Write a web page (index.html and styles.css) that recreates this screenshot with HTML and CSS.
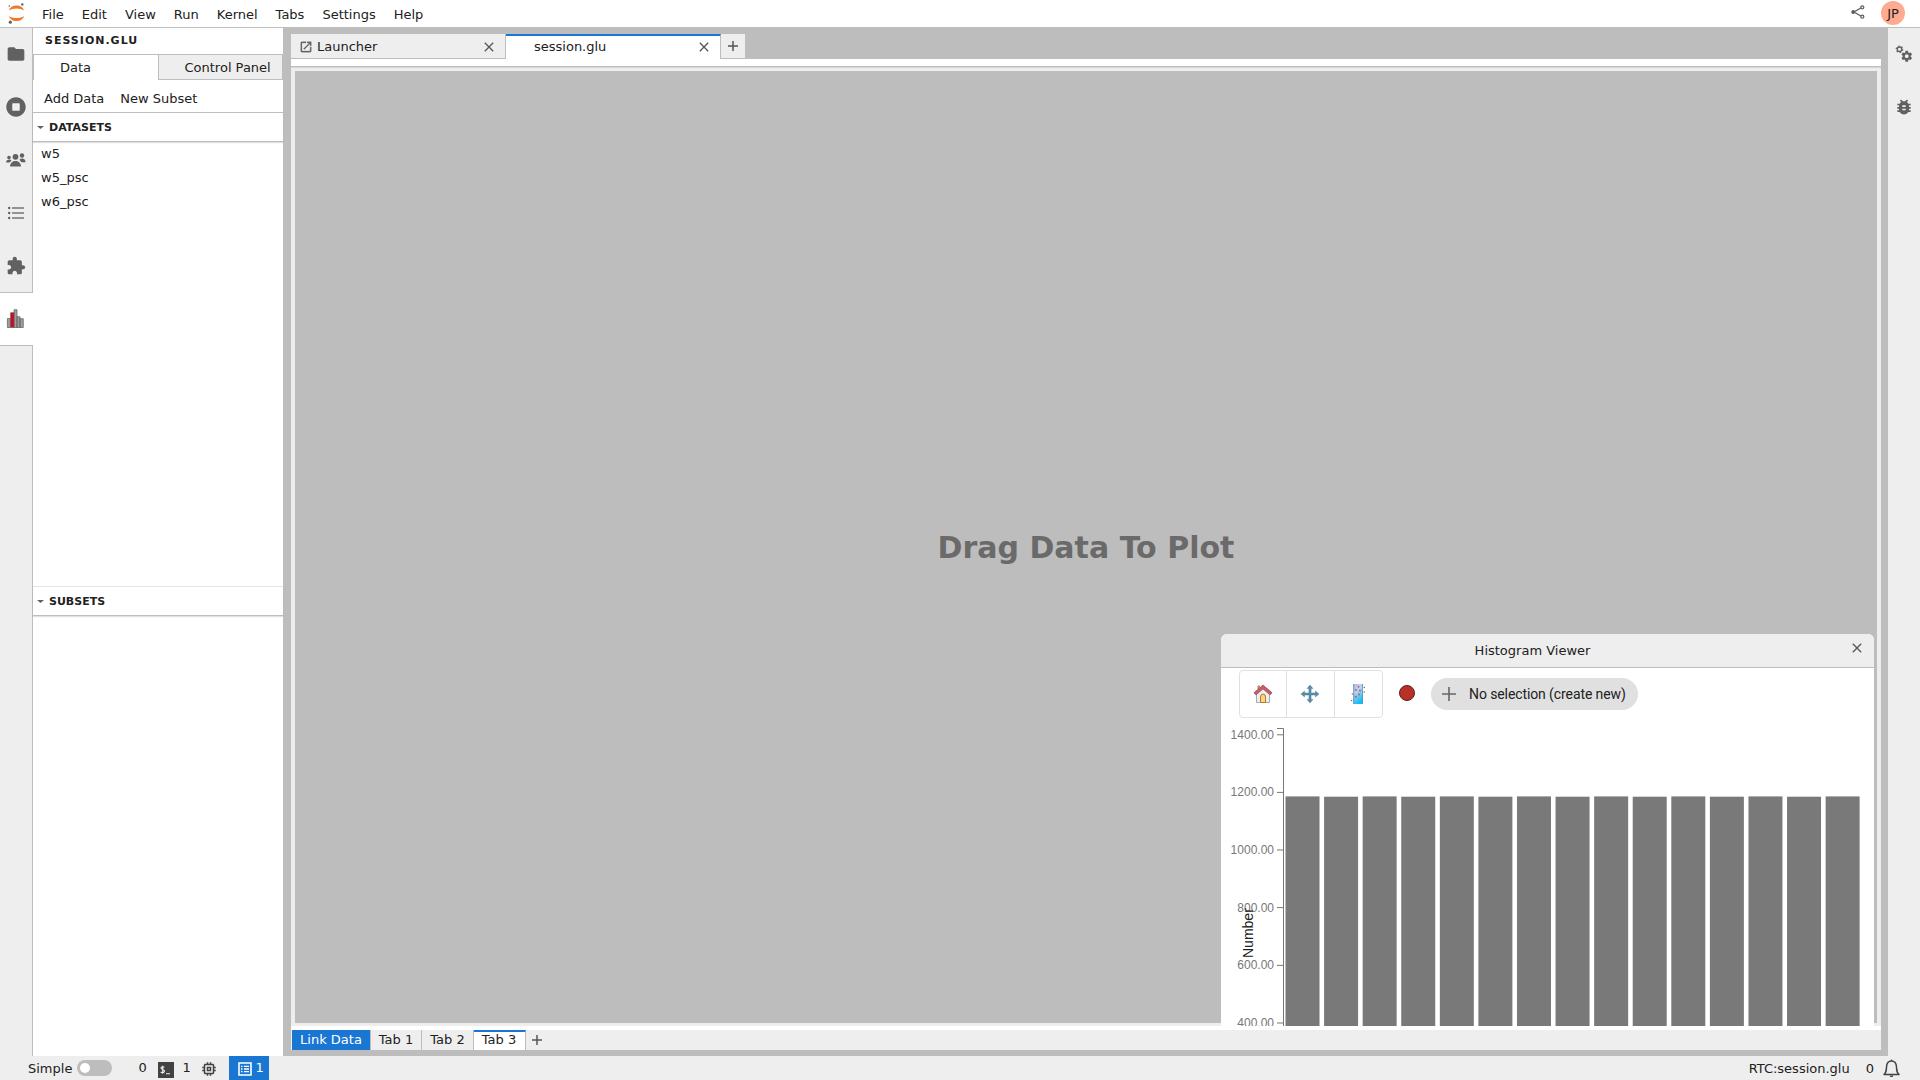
FILE: index.html
```html
<!DOCTYPE html>
<html lang="en">
<head>
<meta charset="utf-8">
<title>session.glu - JupyterLab</title>
<link rel="stylesheet" href="styles.css">
</head>
<body>
<div class="app">
  <header class="topbar">
    <svg class="logo" width="17" height="21" viewBox="0 0 17 21">
      <path d="M1 7.600C2.600 .8 14.400 .8 16 7.600C12.600 4.800 4.400 4.800 1 7.600z" fill="#f37726"/>
      <path d="M1 13C2.600 19.800 14.400 19.800 16 13C12.600 15.800 4.400 15.800 1 13z" fill="#f37726"/>
      <circle cx="14.3" cy="1.4" r="1.2" fill="#616161"/><circle cx="1.3" cy="3" r=".8" fill="#616161"/><circle cx="2.300" cy="19.200" r="1.6" fill="#616161"/>
    </svg>
    <nav class="menu"><span>File</span><span>Edit</span><span>View</span><span>Run</span><span>Kernel</span><span>Tabs</span><span>Settings</span><span>Help</span></nav>
    <svg class="share" width="14" height="14" viewBox="0 0 14 14" fill="none" stroke="#616161" stroke-width="1.3">
      <path d="M10.2 2.8L3 7l7.200 4.200"/><circle cx="11.300" cy="2.300" r="1.500"/><circle cx="11.300" cy="11.700" r="1.500"/><circle cx="2.200" cy="7" r="1.300" fill="#616161"/>
    </svg>
    <span class="avatar">JP</span>
  </header>

  <main class="workspace">
    <aside class="rail rail-left">
      <div class="rail-tab"><svg width="20" height="20" viewBox="0 0 24 24"><path d="M10 4H4c-1.1 0-1.990.9-1.990 2L2 18c0 1.100.9 2 2 2h16c1.100 0 2-.9 2-2V8c0-1.100-.9-2-2-2h-8l-2-2z"/></svg></div>
      <div class="rail-tab"><svg width="20" height="20" viewBox="0 0 512 512"><path d="M256 8C119 8 8 119 8 256s111 248 248 248 248-111 248-248S393 8 256 8zm96 328c0 8.800-7.200 16-16 16H176c-8.800 0-16-7.200-16-16V176c0-8.800 7.200-16 16-16h160c8.800 0 16 7.200 16 16v160z"/></svg></div>
      <div class="rail-tab"><svg width="20" height="20" viewBox="0 0 20 20"><circle cx="9.500" cy="6.800" r="2.900"/><path d="M4 16.500c0-7.500 11-7.500 11 0z"/><circle cx="3" cy="7.500" r="1.800"/><circle cx="16" cy="5.500" r="2.200"/><path d="M0 12.500c0-3 4-4 5.500-2L3.800 12.500zM13.400 9.500c2.500-2.400 6.600-.5 6.100 2.800h-4.200z"/></svg></div>
      <div class="rail-tab"><svg width="20" height="20" viewBox="0 0 20 20"><path d="M6 4.200h12v1.600H6zM6 9.200h12v1.600H6zM6 14.200h12v1.600H6z" fill="#757575"/><circle cx="3.200" cy="5" r="1.200"/><circle cx="3.200" cy="10" r="1.200"/><circle cx="3.200" cy="15" r="1.200"/></svg></div>
      <div class="rail-tab"><svg width="20" height="20" viewBox="0 0 24 24"><path d="M20.500 11H19V7c0-1.100-.9-2-2-2h-4V3.500C13 2.120 11.880 1 10.500 1S8 2.120 8 3.500V5H4c-1.100 0-1.990.9-1.990 2v3.800H3.500c1.490 0 2.700 1.210 2.700 2.700s-1.210 2.700-2.700 2.700H2V20c0 1.100.9 2 2 2h3.800v-1.500c0-1.490 1.210-2.700 2.700-2.700 1.490 0 2.700 1.210 2.700 2.700V22H17c1.100 0 2-.9 2-2v-4h1.500c1.380 0 2.500-1.120 2.500-2.500S21.880 11 20.500 11z"/></svg></div>
      <div class="rail-tab active"><svg width="20" height="20" viewBox="0 0 20 20" stroke="#5c5c5c" stroke-width=".7"><path d="M1.400 9.500h3v9h-3zM8 .7h3v17.800H8zM11 7.700h3v10.800h-3zM14 9.700h3.300v8.800H14z" fill="#9a9fa3"/><path d="M4.600 3.700h3.400v14.800H4.600z" fill="#e2001a"/></svg></div>
    </aside>

    <aside class="panel">
      <div class="panel-title">SESSION.GLU</div>
      <div class="panel-tabs"><div class="panel-tab current">Data</div><div class="panel-tab">Control Panel</div></div>
      <div class="panel-actions"><span>Add Data</span><span>New Subset</span></div>
      <section class="datasets">
        <h2><i class="caret"></i>DATASETS</h2>
        <ul><li>w5</li><li>w5_psc</li><li>w6_psc</li></ul>
      </section>
      <section class="subsets"><h2><i class="caret"></i>SUBSETS</h2></section>
    </aside>

    <section class="dock">
      <div class="doc-tabs">
        <div class="doc-tab">
          <svg class="launch" width="14" height="14" viewBox="0 0 24 24"><path d="M19 19H5V5h7V3H5c-1.110 0-2 .9-2 2v14c0 1.100.89 2 2 2h14c1.100 0 2-.9 2-2v-7h-2v7zM14 3v2h3.590l-9.830 9.830 1.410 1.410L19 6.410V10h2V3h-7z" stroke="#616161" stroke-width=".5"/></svg>
          <span>Launcher</span>
          <svg class="close" width="10" height="10" viewBox="0 0 10 10"><path d="M.8.8l8.400 8.400M9.200.8L.8 9.200"/></svg>
        </div>
        <div class="doc-tab current">
          <span>session.glu</span>
          <svg class="close" width="10" height="10" viewBox="0 0 10 10"><path d="M.8.8l8.400 8.400M9.200.8L.8 9.200"/></svg>
        </div>
        <div class="doc-add"><svg class="plus" width="10" height="10" viewBox="0 0 10 10"><path d="M5 0v10M0 5h10"/></svg></div>
      </div>
      <div class="doc-toolbar"></div>
      <div class="board">
        <div class="canvas">Drag Data To Plot</div>
        <div class="viewer">
          <div class="viewer-head">Histogram Viewer<svg class="close" width="10" height="10" viewBox="0 0 10 10"><path d="M.8.8l8.400 8.400M9.200.8L.8 9.200"/></svg></div>
          <div class="viewer-tools">
            <div class="tool-group">
              <div class="tool"><svg width="20" height="20" viewBox="0 0 20 20"><path d="M3.500 10v8.500h13V10L10 4z" fill="#eee" stroke="#aaa"/><path d="M4.500 1.500H7v4H4.500z" fill="#b99155"/><path d="M1.800 10L10 3l8.200 7" fill="none" stroke="#8f4450" stroke-width="3.600"/><path d="M2.200 9.800L10 3l7.800 6.800" fill="none" stroke="#c4606c" stroke-width="2.500"/><path d="M7.500 18.500V13a2.500 3 0 0 1 5 0v5.500z" fill="#fbd487" stroke="#b87828"/></svg></div>
              <div class="tool"><svg width="20" height="20" viewBox="0 0 20 20"><path d="M10 1l3 3.600h-1.900v4.300h4.300V7L19 10l-3.600 3v-1.900h-4.300v4.300H13L10 19l-3-3.600h1.900v-4.300H4.600V13L1 10l3.600-3v1.900h4.300V4.600H7z" fill="#5c8ba6" stroke="#427895" stroke-width=".4"/></svg></div>
              <div class="tool"><svg width="20" height="20" viewBox="0 0 20 20"><defs><linearGradient id="band" x2="0.400" y2="1"><stop stop-color="#b9b6e8"/><stop offset=".4" stop-color="#b5daf4"/><stop offset="1" stop-color="#16bdf4"/></linearGradient></defs><path d="M5.300 0H15v20H5.300z" fill="url(#band)"/><path d="M5.300 0h1v20h-1zM14.200 0h.8v20h-.8z" fill="#688fbf"/><g fill="#e34250"><circle cx="10.500" cy="2.800" r=".9"/><circle cx="8" cy="6" r=".9"/><circle cx="12" cy="6.500" r=".9"/><circle cx="11" cy="10.500" r=".9"/><circle cx="8" cy="12.700" r=".9"/></g><g fill="#777"><circle cx="16.300" cy="3.500" r=".8"/><circle cx="16.300" cy="8" r=".8"/><circle cx="4.400" cy="10" r=".8"/><circle cx="3.600" cy="16.500" r=".8"/></g></svg></div>
            </div>
            <i class="dot"></i>
            <div class="chip"><svg width="14" height="14" viewBox="0 0 14 14"><path d="M7 0v14M0 7h14" stroke="#666" stroke-width="1.600"/></svg>No selection (create new)</div>
          </div>
          <svg class="plot" width="653" height="306" viewBox="1221 720 653 306">
            <g class="bars">
              <rect x="1285.500" y="796.400" width="34" height="240"/><rect x="1324.080" y="796.700" width="34" height="240"/><rect x="1362.660" y="796.400" width="34" height="240"/><rect x="1401.240" y="796.700" width="34" height="240"/><rect x="1439.820" y="796.400" width="34" height="240"/><rect x="1478.400" y="796.700" width="34" height="240"/><rect x="1516.980" y="796.400" width="34" height="240"/><rect x="1555.560" y="796.700" width="34" height="240"/><rect x="1594.140" y="796.400" width="34" height="240"/><rect x="1632.720" y="796.700" width="34" height="240"/><rect x="1671.300" y="796.400" width="34" height="240"/><rect x="1709.880" y="796.700" width="34" height="240"/><rect x="1748.460" y="796.400" width="34" height="240"/><rect x="1787.040" y="796.700" width="34" height="240"/><rect x="1825.620" y="796.400" width="34" height="240"/>
            </g>
            <path class="axis" d="M1277 728.500h6.500V1030M1277 734.800h6M1277 792.400h6M1277 850h6M1277 907.600h6M1277 965.400h6M1277 1023h6"/>
            <g class="ticks"><text x="1274" y="739">1400.00</text><text x="1274" y="796">1200.00</text><text x="1274" y="854">1000.00</text><text x="1274" y="912">800.00</text><text x="1274" y="969">600.00</text><text x="1274" y="1027">400.00</text></g>
            <text class="ylabel" transform="translate(1253 958) rotate(-90)">Number</text>
          </svg>
        </div>
      </div>
      <div class="board-tabs">
        <div class="link">Link Data</div><div class="board-tab">Tab 1</div><div class="board-tab">Tab 2</div><div class="board-tab current">Tab 3</div>
        <svg class="plus" width="10" height="10" viewBox="0 0 10 10"><path d="M5 0v10M0 5h10"/></svg>
      </div>
    </section>

    <aside class="rail rail-right">
      <div class="rail-tab"><svg width="20" height="20" viewBox="0 0 40 40"><path transform="translate(12.500 11.500) scale(1.080)" d="M19.430 12.980c.04-.32.07-.64.07-.98s-.03-.66-.07-.98l2.110-1.650c.19-.15.24-.42.12-.64l-2-3.460c-.12-.22-.39-.3-.61-.22l-2.490 1c-.52-.4-1.080-.73-1.690-.98l-.38-2.650C14.460 2.180 14.250 2 14 2h-4c-.25 0-.46.18-.49.42l-.38 2.650c-.61.25-1.170.59-1.690.98l-2.490-1c-.23-.09-.49 0-.61.22l-2 3.460c-.13.22-.07.49.12.64l2.110 1.650c-.04.32-.07.65-.07.98s.03.66.07.98l-2.110 1.650c-.19.15-.24.42-.12.64l2 3.460c.12.22.39.3.61.22l2.490-1c.52.4 1.080.73 1.690.98l.38 2.650c.03.24.24.42.49.42h4c.25 0 .46-.18.49-.42l.38-2.650c.61-.25 1.170-.59 1.690-.98l2.490 1c.23.09.49 0 .61-.22l2-3.460c.12-.22.07-.49-.12-.64l-2.110-1.650zM12 15.500c-1.930 0-3.500-1.570-3.500-3.500s1.570-3.500 3.500-3.500 3.500 1.570 3.500 3.500-1.570 3.500-3.500 3.500z"/><circle cx="11" cy="10.500" r="4.600" fill="none" stroke="#616161" stroke-width="2.800"/><circle cx="11" cy="10.500" r="6.600" fill="none" stroke="#616161" stroke-width="2.200" stroke-dasharray="2.900 4"/></svg></div>
      <div class="rail-tab"><svg width="20" height="20" viewBox="0 0 24 24"><path d="M20 8h-2.810c-.45-.78-1.070-1.450-1.820-1.960L17 4.410 15.590 3l-2.170 2.170C12.960 5.060 12.490 5 12 5c-.49 0-.96.06-1.410.17L8.410 3 7 4.410l1.620 1.630C7.880 6.550 7.260 7.220 6.810 8H4v2h2.090c-.05.33-.09.66-.09 1v1H4v2h2v1c0 .34.04.67.09 1H4v2h2.810c1.040 1.790 2.970 3 5.190 3s4.150-1.210 5.190-3H20v-2h-2.090c.05-.33.09-.66.09-1v-1h2v-2h-2v-1c0-.34-.04-.67-.09-1H20V8zm-6 8h-4v-2h4v2zm0-4h-4v-2h4v2z"/></svg></div>
    </aside>
  </main>

  <footer class="status">
    <span class="simple">Simple</span><i class="switch"></i>
    <span class="terms">0</span>
    <svg class="term" width="16" height="16" viewBox="0 0 16 16"><path d="M0 0h16v16H0z" fill="#424242"/><path d="M6.300 5.300C5.500 4.400 3 4.400 3 6s3.500 1.300 3.500 3.100S3.500 11 2.700 9.900M4.700 3.700v8M8 11.800h4" fill="none" stroke="#eee" stroke-width="1.100"/></svg>
    <span class="kernels">1</span>
    <svg class="cpu" width="18" height="18" viewBox="0 0 24 24"><path fill="#424242" d="M15 9H9v6h6V9zm-2 4h-2v-2h2v2zm8-2V9h-2V7c0-1.100-.9-2-2-2h-2V3h-2v2h-2V3H9v2H7c-1.100 0-2 .9-2 2v2H3v2h2v2H3v2h2v2c0 1.100.9 2 2 2h2v2h2v-2h2v2h2v-2h2c1.100 0 2-.9 2-2v-2h2v-2h-2v-2h2zm-4 6H7V7h10v10z"/></svg>
    <div class="lsp"><svg width="14" height="14" viewBox="0 0 14 14" fill="none" stroke="#fff"><path d="M1 1h12v12H1z" stroke-width="1.600"/><path d="M3 4.300h1.500M6 4.300h5M3 7h1.500M6 7h5M3 9.700h1.500M6 9.700h5" stroke-width="1.300"/></svg>1</div>
    <span class="rtc">RTC:session.glu</span><span class="notes">0</span>
    <svg class="bell" width="17" height="19" viewBox="0 0 17 19" fill="none" stroke="#424242" stroke-width="1.500"><path d="M1 15.500c2.500-2 2.300-4 2.500-7.500.2-4 2-6 5-6s4.800 2 5 6c.2 3.500 0 5.500 2.500 7.500z" stroke-linejoin="round"/><path d="M6.700 16.500h3.600c0 2-3.600 2-3.600 0z" fill="#424242" stroke="none"/><path d="M8.500.6v1.200"/></svg>
  </footer>
</div>
</body>
</html>
```
FILE: styles.css
```css
* { box-sizing: border-box; }
body { margin: 0; font: 13px/1 "DejaVu Sans", sans-serif; color: #212121; background: #bdbdbd; }
svg { display: block; flex: none; }
.app { height: 1080px; display: flex; flex-direction: column; overflow: hidden; }

.topbar { height: 28px; flex: none; display: flex; align-items: center; background: #fff; border-bottom: 1px solid #bdbdbd; padding: 0 15px 0 8px; }
.logo { margin-right: 8px; }
.menu { display: flex; flex: 1; padding-top: 2px; }
.menu span { padding: 0 9px; }
.share { margin: 0 16px 3px 0; }
.avatar { width: 24px; height: 24px; border-radius: 50%; background: #ffab91; display: grid; place-items: center; margin-bottom: 1px; padding-top: 1px; }

.workspace { flex: 1; min-height: 0; display: flex; }
.rail { background: #eee; flex: none; fill: #616161; }
.rail-left { width: 33px; display: flex; flex-direction: column; border-right: 1px solid #bdbdbd; }
.rail-right { width: 32px; margin-left: 7px; }
.rail-tab { height: 53px; flex: none; display: grid; place-items: center; padding-bottom: 1px; }
.rail-tab.active { background: #fff; width: 33px; padding-right: 1px; height: 54px; margin-top: -1px; border: solid #bdbdbd; border-width: 1px 0; }

.panel { width: 250px; flex: none; background: #fff; display: flex; flex-direction: column; }
.panel-title { height: 26px; padding: 7px 12px 0; font-size: 11px; font-weight: bold; letter-spacing: 1px; }
.panel-tabs { height: 26px; display: flex; }
.panel-tab { flex: 1; background: #eee; border: 1px solid #bdbdbd; padding: 6px 0 0 26px; white-space: nowrap; }
.panel-tab.current { background: #fff; border-bottom: 0; border-right: 0; }
.panel-actions { height: 33px; display: flex; gap: 16px; padding: 12px 11px 0; border-bottom: 1px solid #bdbdbd; }
.panel h2 { margin: 0; height: 29px; font-size: 11px; display: flex; align-items: center; gap: 5px; padding: 1px 0 0 4px; border-bottom: 1px solid #bdbdbd; box-shadow: 0 1px 1px rgba(0,0,0,.12); }
.caret { width: 7px; height: 3px; background: #616161; clip-path: polygon(0 0, 100% 0, 50% 100%); }
.datasets { height: 473px; }
.subsets { flex: 1; border-top: 1px solid #e4e4e4; }
.panel ul { margin: 0; padding: 0; list-style: none; }
.panel li { height: 24px; padding: 5px 8px 0; }

.dock { flex: 1; min-width: 0; margin-left: 8px; padding: 6px 0; display: flex; flex-direction: column; }
.doc-tabs { height: 25px; flex: none; display: flex; }
.doc-tab { width: 215px; height: 25px; display: flex; align-items: center; background: #eee; border: solid #bdbdbd; border-width: 0 1px 1px 0; padding: 1px 11px 0 8px; }
.doc-tab span { flex: 1; padding-left: 4px; }
.doc-tab.current { background: #fff; border-bottom: 0; border-top: 2px solid #1976d2; padding: 0 11px 2px 24px; }
.doc-add { width: 24px; background: #eee; display: grid; place-items: center; border-bottom: 1px solid #bdbdbd; }
.close, .plus { stroke: #555; stroke-width: 1.300; fill: none; }
.plus { stroke-width: 1.500; }
.launch { fill: #616161; }
.doc-toolbar { height: 8px; flex: none; background: #fff; border-bottom: 1px solid #bdbdbd; }
.board { position: relative; height: 959px; flex: none; background: #eee; padding: 4px 4px 3px; overflow: hidden; box-shadow: inset 0 1px 1px rgba(0,0,0,.1); }
.canvas { height: 100%; display: grid; place-items: center; background: #bdbdbd; color: #6a6a6a; font-size: 30px; font-weight: bold; padding-top: 2px; }

.viewer { position: absolute; left: 930px; top: 567px; width: 653px; height: 500px; background: #fff; border-radius: 6px 6px 0 0; overflow: hidden; }
.viewer-head { height: 34px; display: grid; place-items: center; background: #eee; border-bottom: 1px solid #bdbdbd; padding-right: 30px; }
.viewer-head .close { position: absolute; right: 12px; top: 9px; }
.viewer-tools { height: 52px; display: flex; align-items: flex-start; padding: 2px 0 0 18px; }
.tool-group { display: flex; width: 144px; height: 48px; border: 1px solid #e0e0e0; border-radius: 4px; }
.tool { flex: 1; display: grid; place-items: center; }
.tool + .tool { border-left: 1px solid #e0e0e0; padding-right: 1px; }
.dot { width: 16px; height: 16px; border-radius: 50%; background: #b93026; border: 1px solid #552320; margin: 15px 16px 0; }
.chip { width: 207px; height: 32px; margin-top: 8px; border-radius: 16px; background: #e0e0e0; display: flex; align-items: center; gap: 13px; padding-left: 11px; font-family: Roboto, sans-serif; font-size: 14px; letter-spacing: -.1px; white-space: nowrap; }
.bars { fill: #797979; }
.axis { fill: none; stroke: #777; }
.ticks { fill: #777; font: 12px "Liberation Sans", sans-serif; text-anchor: end; }
.ylabel { fill: #212121; font: 14px "Liberation Sans", sans-serif; }

.board-tabs { margin-top: 4px; height: 20px; flex: none; display: flex; background: #eee; padding-left: 1px; box-shadow: 0 -4px #fff; }
.link, .board-tab { border-right: 1px solid #bdbdbd; padding-top: 3px; text-align: center; }
.link { width: 79px; background: #1976d2; color: #fff; }
.board-tab { width: 51px; }
.board-tab + .board-tab { width: 52px; }
.board-tab.current { width: 52px; background: #fff; border-top: 2px solid #1976d2; padding: 1px 1px 0 0; }
.board-tabs .plus { margin: 5px 0 0 6px; }

.status { height: 24px; flex: none; background: #eee; display: flex; align-items: center; padding: 0 20px 0 28px; }
.simple { margin-right: 5px; }
.switch { width: 35px; height: 16px; border-radius: 8px; background: #bdbdbd; padding: 3px; margin-right: 26px; }
.switch::before { content: ""; display: block; width: 10px; height: 10px; border-radius: 50%; background: #fff; }
.terms { width: 20px; padding-bottom: 1px; }
.term { margin-top: 4px; }
.kernels { margin-left: 8px; width: 18px; padding-bottom: 1px; }
.cpu { margin-top: 2px; }
.lsp { margin-left: 11px; width: 40px; height: 24px; background: #1976d2; color: #fff; display: flex; align-items: center; gap: 3px; padding: 0 0 1px 9px; }
.lsp svg { margin-top: 3px; }
.rtc { margin-left: auto; margin-right: 16px; }
.notes { margin-right: 9px; }
```
